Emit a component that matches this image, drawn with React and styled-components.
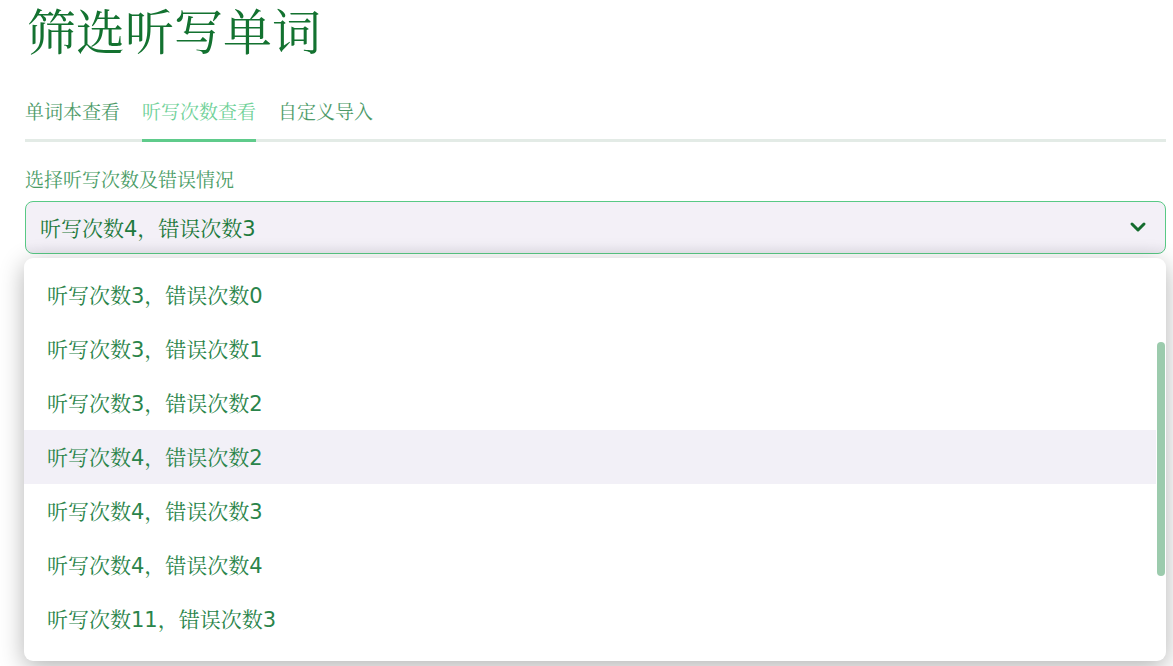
import React from "react";
import styled, { createGlobalStyle } from "styled-components";
import { ChevronDown } from "lucide-react";

const GlobalStyle = createGlobalStyle`
  html, body {
    margin: 0;
    padding: 0;
    background: #ffffff;
  }
  body {
    font-family: "DejaVu Sans", "Noto Sans CJK SC", sans-serif;
  }
`;

// 中文字体栈，衬线优先
const cjkSans = `"DejaVu Sans", "Noto Serif CJK SC", "Noto Sans CJK SC", sans-serif`;

const tabs = ["单词本查看", "听写次数查看", "自定义导入"];

const options = [
  "听写次数3，错误次数0",
  "听写次数3，错误次数1",
  "听写次数3，错误次数2",
  "听写次数4，错误次数2",
  "听写次数4，错误次数3",
  "听写次数4，错误次数4",
  "听写次数11，错误次数3",
];

const App = () => {
  const selected = "听写次数4，错误次数3";
  const hovered = 3;

  return (
    <>
      <GlobalStyle />
      <Page>
        <Title>筛选听写单词</Title>
        <TabBar>
          {tabs.map((t, i) => (
            <Tab key={t} active={i === 1}>{t}</Tab>
          ))}
        </TabBar>

        <Label>选择听写次数及错误情况</Label>
        <SelectWrap>
          <SelectBox>
            <span>{selected}</span>
            <ChevronDown size={24} strokeWidth={3} color="#146c2e" />
          </SelectBox>

          <Menu>
            {options.map((o, i) => (
              <Option key={o} highlighted={i === hovered}>{o}</Option>
            ))}
            <Thumb />
          </Menu>
        </SelectWrap>

        <Table>
          {Array.from({ length: 20 }).map((_, i) => (
            <Cell key={i} />
          ))}
        </Table>
      </Page>
    </>
  );
};

const Page = styled.div`
  height: 666px;
  overflow: hidden;
  box-sizing: border-box;
  padding: 0 7px 0 25px;
`;

const Title = styled.h1`
  margin: 0;
  padding-left: 2px;
  font-family: "Liberation Serif", "Noto Serif CJK SC", "Noto Sans CJK SC", serif;
  font-weight: normal;
  font-size: 49px;
  line-height: 68px;
  color: #137230;
`;

const TabBar = styled.div`
  display: flex;
  gap: 22px;
  margin-top: 20px;
  border-bottom: 3px solid #e3ebe6;
`;

const Tab = styled.div`
  font-family: ${cjkSans};
  font-size: 19px;
  line-height: 24px;
  padding: 12px 0 15px;
  margin-bottom: -3px;
  color: ${(p) => (p.active ? "#6fd198" : "#4c9a68")};
  border-bottom: 3px solid ${(p) => (p.active ? "#5fcb8b" : "transparent")};
`;

const Label = styled.div`
  margin-top: 26px;
  margin-bottom: 9px;
  font-family: ${cjkSans};
  font-size: 19px;
  line-height: 24px;
  color: #4a9c66;
`;

const SelectWrap = styled.div`
  position: relative;
`;

const SelectBox = styled.div`
  box-sizing: border-box;
  height: 53px;
  display: flex;
  align-items: center;
  justify-content: space-between;
  padding: 0 15px 2px 14px;
  border: 1px solid #58c985;
  border-radius: 8px;
  background: linear-gradient(to bottom, #f3f0f7 80%, #ebe8f0);
  font-family: ${cjkSans};
  font-size: 21px;
  color: #1e7a3d;
`;

const Menu = styled.div`
  position: absolute;
  z-index: 10;
  top: 57px;
  left: -1px;
  right: 0;
  height: 403px;
  box-sizing: border-box;
  padding-top: 10px;
  background: #ffffff;
  border-radius: 9px;
  overflow: hidden;
  box-shadow: 0 6px 24px rgba(0, 0, 0, 0.3);
`;

const Option = styled.div`
  box-sizing: border-box;
  height: 54px;
  display: flex;
  align-items: center;
  padding: 0 0 3px 23px;
  margin-right: 10px;
  font-family: ${cjkSans};
  font-size: 21px;
  color: #2a844a;
  background: ${(p) => (p.highlighted ? "#f2f0f7" : "transparent")};
`;

const Thumb = styled.div`
  position: absolute;
  right: 1px;
  top: 84px;
  width: 8px;
  height: 234px;
  border-radius: 4px;
  background: #9ccbad;
`;

const Table = styled.div`
  display: grid;
  grid-template-columns: 151px 307px 134px 164px 1fr;
  margin-top: 40px;
  border-top: 1px solid #d8d8d8;
  border-right: 1px solid #d8d8d8;
`;

const Cell = styled.div`
  height: 48px;
  border-left: 1px solid #d8d8d8;
  border-bottom: 1px solid #d8d8d8;
  background: #ffffff;
`;

export default App;
